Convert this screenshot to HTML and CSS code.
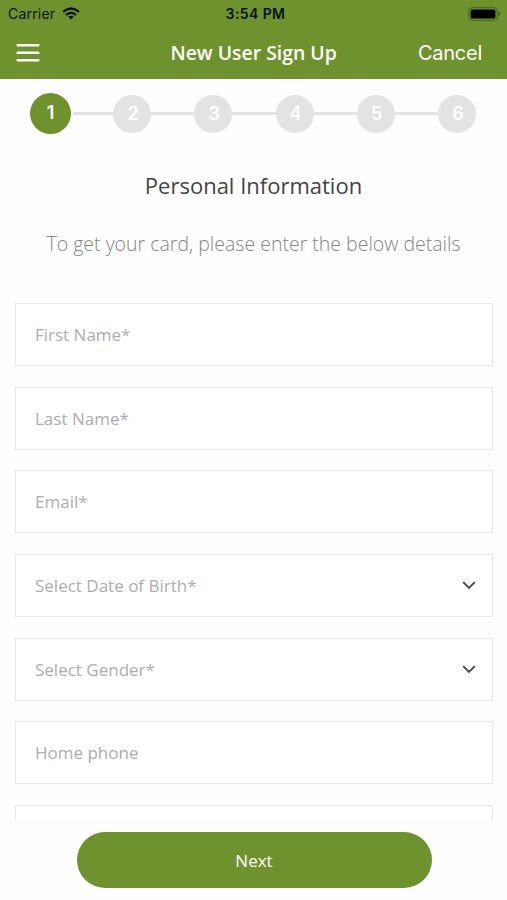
FILE: index.html
```html
<!DOCTYPE html>
<html lang="en">
<head>
<meta charset="utf-8">
<title>New User Sign Up</title>
<link rel="stylesheet" href="styles.css">
</head>
<body>
<header class="header">
  <div class="status">
    <div class="carrier"><span>Carrier</span>
      <svg class="wifi" width="18" height="13" viewBox="0 0 18 13"><g fill="none" stroke="#0b1204" stroke-width="2.2"><path d="M1.1 4.8Q9-1.8 16.9 4.8"/><path d="M4 8Q9 3.7 14 8"/></g><path d="M6.3 9.8Q9 7.7 11.7 9.8L9 12.5Z" fill="#0b1204"/></svg>
    </div>
    <span class="time">3:54 PM</span>
    <svg class="battery" width="33" height="14" viewBox="0 0 33 14"><rect x=".7" y=".7" width="28.6" height="12.6" rx="3.5" fill="none" stroke="#456019" stroke-width="1"/><rect x="2.6" y="2.6" width="24.8" height="8.8" rx="1.5" fill="#000"/><path d="M30.6 4.8Q33.6 7 30.6 9.2Z" fill="#35500f"/></svg>
  </div>
  <nav class="nav">
    <svg class="menu" width="24" height="20" viewBox="0 0 24 20"><path d="M1.7 2.2H22.3M1.7 9.8H22.3M1.7 17.2H22.3" stroke="#fff" stroke-width="2.6" stroke-linecap="round"/></svg>
    <h1 class="title">New User Sign Up</h1>
    <span class="cancel">Cancel</span>
  </nav>
</header>
<ol class="steps">
  <li class="step active"><span>1</span></li>
  <li class="step"><span>2</span></li>
  <li class="step"><span>3</span></li>
  <li class="step"><span>4</span></li>
  <li class="step"><span>5</span></li>
  <li class="step"><span>6</span></li>
</ol>
<h2 class="heading">Personal Information</h2>
<p class="intro">To get your card, please enter the below details</p>
<main class="form">
  <div class="field"><span>First Name*</span></div>
  <div class="field"><span>Last Name*</span></div>
  <div class="field"><span>Email*</span></div>
  <div class="field"><span>Select Date of Birth*</span><svg width="14" height="9" viewBox="0 0 14 9"><path d="M1.2 1.2L7 7L12.8 1.2" fill="none" stroke="#484848" stroke-width="1.9"/></svg></div>
  <div class="field"><span>Select Gender*</span><svg width="14" height="9" viewBox="0 0 14 9"><path d="M1.2 1.2L7 7L12.8 1.2" fill="none" stroke="#484848" stroke-width="1.9"/></svg></div>
  <div class="field"><span>Home phone</span></div>
  <div class="field"></div>
</main>
<footer class="footer"><button class="next">Next</button></footer>
</body>
</html>
```
FILE: styles.css
```css
* { box-sizing: border-box; }
body {
  margin: 0;
  height: 900px;
  overflow: hidden;
  background: #fefefe;
  font-family: "Open Sans", sans-serif;
  display: flex;
  flex-direction: column;
}
.header {
  height: 79px;
  flex: none;
  background: #6e932e;
}
.status {
  height: 27px;
  padding: 0 6px 0 8px;
  display: grid;
  grid-template-columns: 1fr auto 1fr;
  align-items: center;
  font-family: Inter, sans-serif;
  color: #0b1204;
}
.carrier {
  display: flex;
  align-items: center;
  gap: 7px;
  font-size: 14px;
  letter-spacing: 0.2px;
}
.time {
  font-size: 14px;
  font-weight: 600;
  letter-spacing: 0.4px;
  padding-left: 2px;
}
.battery { justify-self: end; }
.nav {
  height: 52px;
  padding: 0 25px 0 16px;
  display: grid;
  grid-template-columns: 1fr 167px 1fr;
  align-items: center;
  color: #fff;
}
.title {
  margin: 0 -10px 0 5px;
  font-size: 19.4px;
  font-weight: 600;
  line-height: 26px;
  white-space: nowrap;
}
.cancel {
  justify-self: end;
  font-family: Inter, sans-serif;
  font-size: 20px;
  letter-spacing: -0.25px;
}
.steps {
  margin: 14px 31px 0 30px;
  padding: 0;
  height: 41px;
  flex: none;
  list-style: none;
  display: flex;
  align-items: center;
}
.step {
  display: flex;
  align-items: center;
  flex: 1;
}
.step span {
  width: 38px;
  height: 38px;
  border-radius: 50%;
  background: #e3e3e3;
  color: #fff;
  font: 600 18px/37px Inter, sans-serif;
  text-align: center;
  padding-left: 2px;
}
.step:last-child { flex: none; }
.step:not(:last-child)::after {
  content: "";
  flex: 1;
  height: 3px;
  background: #e3e3e3;
}
.step.active { flex: 0 0 83px; }
.step.active span {
  width: 41px;
  height: 41px;
  line-height: 40px;
  padding-left: 0;
  background: #6e932e;
}
.step.active::after { margin-left: 2px; }
.heading {
  margin: 35px 0 0;
  flex: none;
  font-size: 22px;
  font-weight: 400;
  line-height: 32px;
  text-align: center;
  color: #444;
}
.intro {
  margin: 29px 0 0;
  flex: none;
  font-size: 19.5px;
  font-weight: 300;
  line-height: 28px;
  text-align: center;
  color: #858585;
}
.form {
  margin-top: 45px;
  padding: 0 14px 0 15px;
  height: 517px;
  flex: none;
  overflow: hidden;
  display: flex;
  flex-direction: column;
  gap: 20.7px;
}
.field {
  height: 63px;
  flex: none;
  padding: 0 16px 0 19px;
  border: 1.5px solid #e8e8e8;
  background: #fff;
  display: flex;
  align-items: center;
  justify-content: space-between;
  font-size: 17px;
  color: #adadad;
}
.footer {
  height: 80px;
  flex: none;
  display: flex;
  justify-content: center;
  padding: 12px 0 0 1px;
}
.next {
  width: 355px;
  height: 56px;
  border: 0;
  border-radius: 28px;
  background: #6e932e;
  color: #fff;
  font: 400 17px "Open Sans", sans-serif;
}
```
